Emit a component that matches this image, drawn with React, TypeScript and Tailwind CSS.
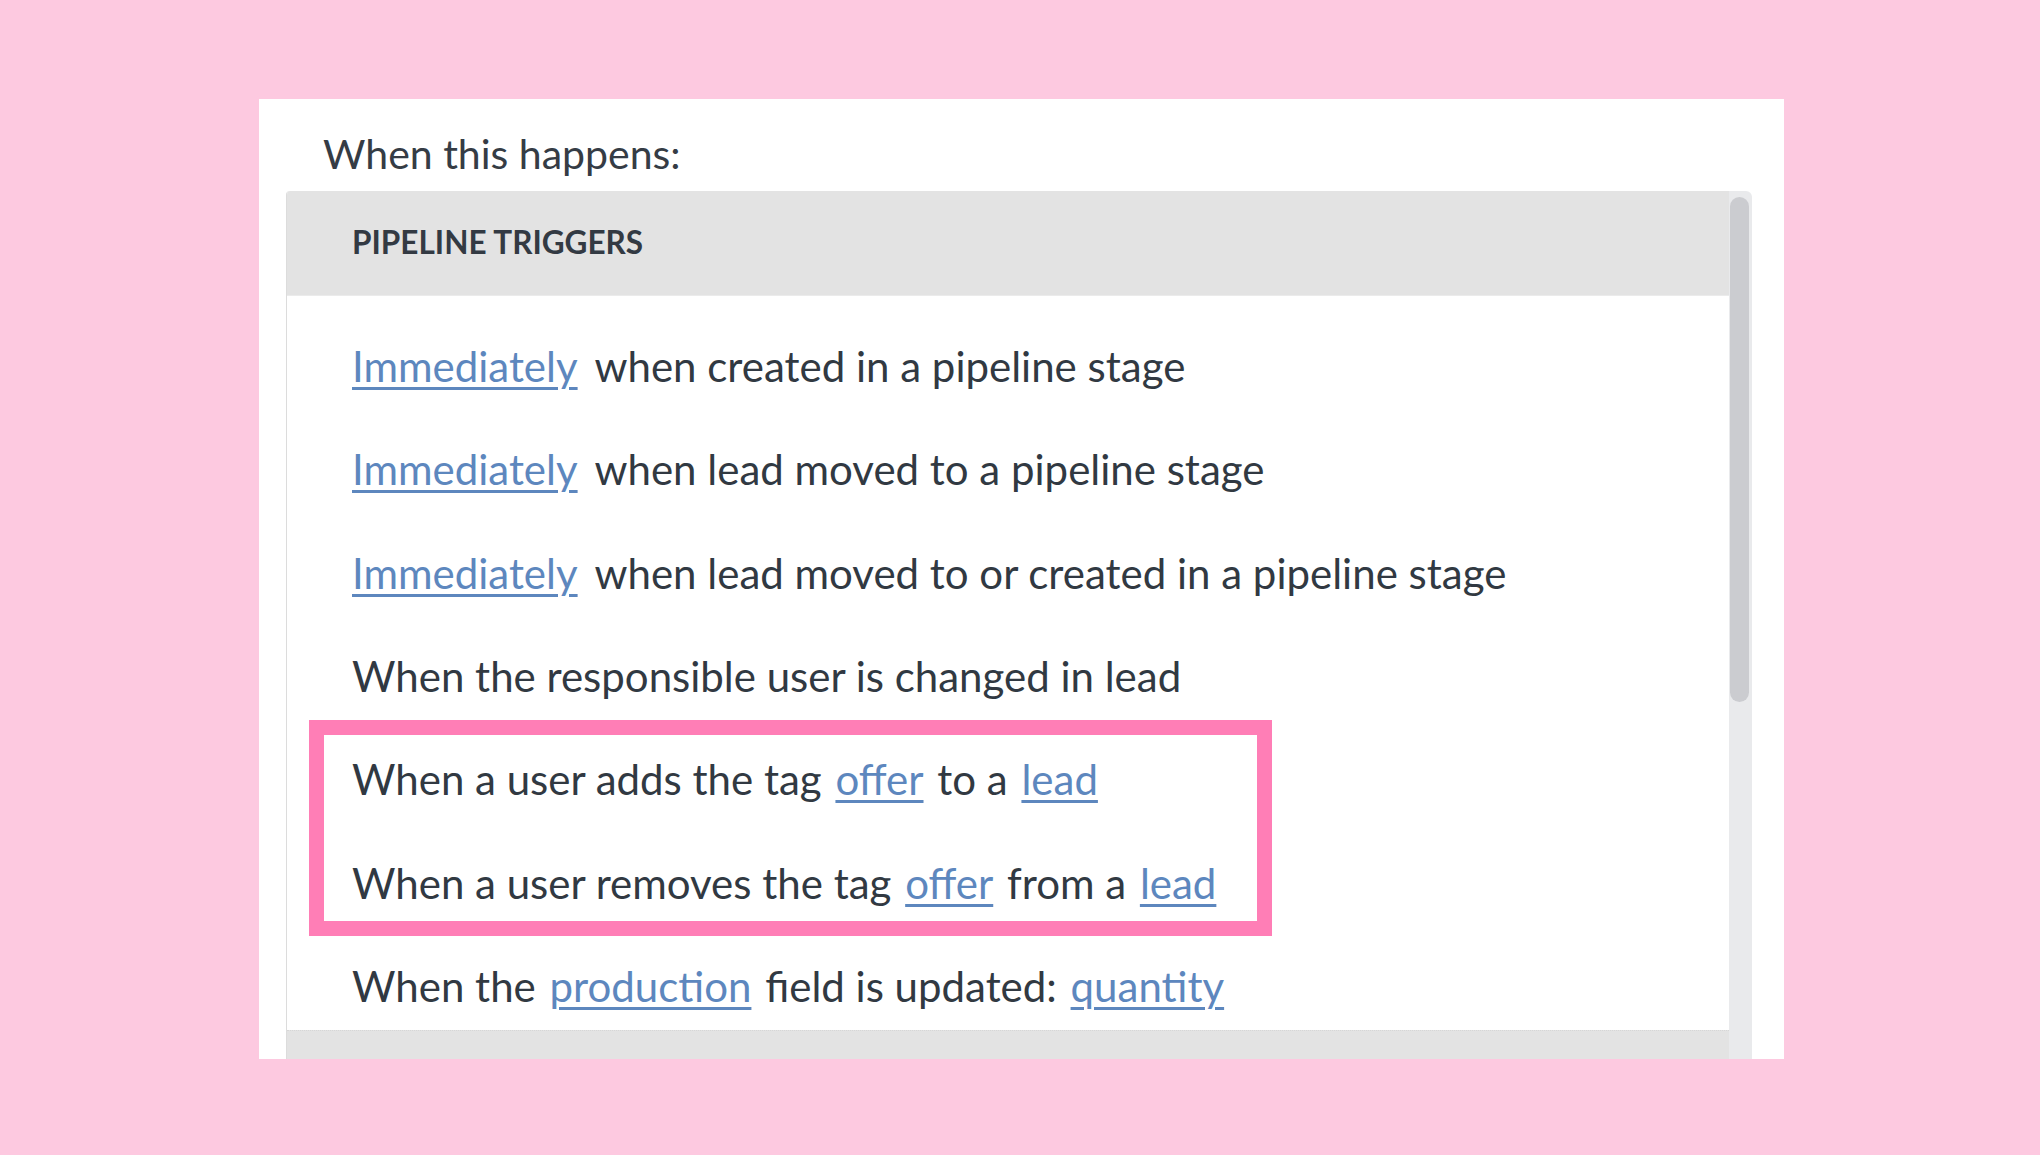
import React from "react";

type Part = string | { link: string };

const rows: Part[][] = [
  [{ link: "Immediately" }, " when created in a pipeline stage"],
  [{ link: "Immediately" }, " when lead moved to a pipeline stage"],
  [{ link: "Immediately" }, " when lead moved to or created in a pipeline stage"],
  ["When the responsible user is changed in lead"],
  ["When a user adds the tag ", { link: "offer" }, " to a ", { link: "lead" }],
  ["When a user removes the tag ", { link: "offer" }, " from a ", { link: "lead" }],
  ["When the ", { link: "production" }, " field is updated: ", { link: "quantity" }],
];

function TriggerRow({ parts }: { parts: Part[] }) {
  return (
    <div className="h-[103.3px] flex items-center whitespace-pre">
      <span>
        {parts.map((p, i) =>
          typeof p === "string" ? (
            p
          ) : (
            <a
              key={i}
              className={`text-[#5d87be] underline decoration-[3px] underline-offset-[5px] ${
                i === 0 ? "mr-[7px]" : "mx-[3px]"
              }`}
            >
              {p.link}
            </a>
          )
        )}
      </span>
    </div>
  );
}

export default function App() {
  return (
    <div
      className="w-[2040px] h-[1155px] bg-[#fdc9e0] overflow-hidden"
      style={{ fontFamily: "Lato, 'Noto Sans', sans-serif" }}
    >
      <div className="ml-[259px] mt-[99px] w-[1525px] h-[960px] bg-white overflow-hidden">
        <div className="pl-[64px] pt-[31px] h-[92px] text-[41px] leading-[48px] text-[#353c45]">
          When this happens:
        </div>

        <div className="ml-[27px] w-[1466px] h-[868px] flex rounded-tr-[6px] rounded-tl-[4px] overflow-hidden border-l border-[#dcdcdc]">
          <div className="flex-1 flex flex-col">
            <div className="h-[105px] bg-[#e3e3e3] border-b border-[#ebebeb] flex items-center pl-[65px] text-[31.5px] font-bold text-[#333a43]">
              PIPELINE TRIGGERS
            </div>
            <div className="relative h-[734px] overflow-hidden pt-[19px] text-[42px] text-[#313942]">
              {rows.map((r, i) => (
                <div key={i} className="pl-[65px]">
                  <TriggerRow parts={r} />
                </div>
              ))}
              <div className="absolute left-[22px] top-[424px] w-[963px] h-[216px] border-[15px] border-[#ff7eb6]" />
            </div>
            <div className="flex-1 bg-[#e3e3e3] border-t border-dotted border-[#d6d6d6]" />
          </div>
          <div className="w-[23px] bg-[#e9eaec] pt-[6px] pl-[1px] pr-[3px]">
            <div className="h-[505px] rounded-full bg-[#cbccd0]" />
          </div>
        </div>
      </div>
    </div>
  );
}
